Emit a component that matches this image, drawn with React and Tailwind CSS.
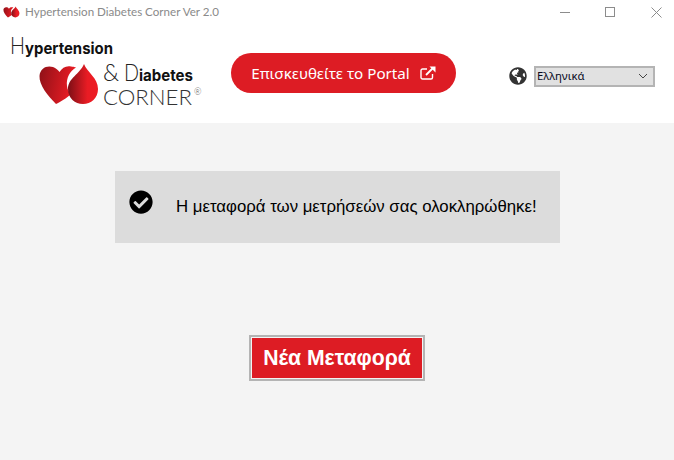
import React from "react";
import { FaCheckCircle, FaGlobeAmericas } from "react-icons/fa";

const Heart = ({ id }) => (
  <>
    <defs>
      <linearGradient id={id + "a"} x1="0" y1="0" x2="1" y2="0.2">
        <stop offset="0" stopColor="#8e1118" />
        <stop offset="1" stopColor="#ed1c24" />
      </linearGradient>
      <linearGradient id={id + "b"} x1="0" y1="0" x2="1" y2="0">
        <stop offset="0" stopColor="#7d0f16" />
        <stop offset="0.65" stopColor="#e91c24" />
        <stop offset="1" stopColor="#ed1c24" />
      </linearGradient>
    </defs>
    <path d="M56 104 C48 96 39 85 39.500 76 C40 68 47 65 53 67 C56 68 58 70 59.500 72 C62 68 66 65.500 71 66.500 C75 67 76 67.500 76 67.500 C70 71 66 78 67 86 C67.500 90 69 92 71 94 C67 98 60 102 56 104 Z" fill={`url(#${id}a)`} />
    <path d="M84 64 C87 72 98 78 98 89 C98 98 91 104 83 104 C75 104 68 98 68 89 C68 78 80 74 84 64 Z" fill={`url(#${id}b)`} />
  </>
);

export default function App() {
  return (
    <div className="w-[674px] h-[460px] flex flex-col bg-[#f4f4f4] overflow-hidden" style={{ fontFamily: "'Liberation Sans', sans-serif" }}>
      <header className="h-[123px] bg-white flex flex-col shrink-0">
        <div className="h-[24px] flex items-center pl-[3px] shrink-0">
          <svg width="17" height="12" viewBox="38 63 62 42" className="mr-[5px]">
            <Heart id="s" />
          </svg>
          <span className="text-[11.600px] text-[#8a8a8a] font-['Lato',sans-serif] leading-none">Hypertension Diabetes Corner Ver 2.0</span>
          <div className="ml-auto flex items-center">
            <svg width="45" height="24" viewBox="0 0 45 24"><path d="M5 12.500H15" stroke="#8c8c8c" strokeWidth="1" /></svg>
            <svg width="46" height="24" viewBox="0 0 46 24"><rect x="5.500" y="7.500" width="9" height="9" fill="none" stroke="#8c8c8c" /></svg>
            <svg width="28" height="24" viewBox="0 0 28 24"><path d="M5.500 7.500L15.500 17.500M15.500 7.500L5.500 17.500" stroke="#8c8c8c" strokeWidth="1" /></svg>
          </div>
        </div>
        <div className="flex-1 flex items-center">
          <svg width="225" height="99" viewBox="0 24 225 99" className="shrink-0">
            <Heart id="l" />
            <text y="54" fill="#111" fontFamily="'Inter'">
              <tspan x="10" fontSize="23" fontFamily="'Lato'" fontWeight="300" fill="#222" textLength="15" lengthAdjust="spacingAndGlyphs">H</tspan>
              <tspan x="25" fontSize="16" fontWeight="700" textLength="88" lengthAdjust="spacingAndGlyphs">ypertension</tspan>
            </text>
            <text y="81" fill="#111" fontFamily="'Inter'">
              <tspan x="103" fontSize="23" fontFamily="'Lato'" fontWeight="300" fill="#222">&amp;</tspan>
              <tspan x="124" fontSize="23" fontFamily="'Lato'" fontWeight="300" fill="#222" textLength="15" lengthAdjust="spacingAndGlyphs">D</tspan>
              <tspan x="139" fontSize="16" fontWeight="700" textLength="54" lengthAdjust="spacingAndGlyphs">iabetes</tspan>
            </text>
            <text y="105" fill="#333" fontFamily="'Lato'" fontWeight="300">
              <tspan x="103" fontSize="21" textLength="89" lengthAdjust="spacingAndGlyphs">CORNER</tspan>
              <tspan x="194" y="95" fontSize="9" fill="#555">®</tspan>
            </text>
          </svg>
          <a className="ml-[6px] mb-[1px] w-[225px] h-[40px] rounded-full bg-[#dd1c24] text-white flex items-center justify-center text-[15.200px] font-['Noto_Sans',sans-serif] gap-[10px]">
            <span>Επισκευθείτε το Portal</span>
            <svg width="16" height="14" viewBox="0 0 16 14" fill="none">
              <path d="M12.500 8V11.500C12.500 12.300 11.800 13 11 13H2.500C1.700 13 1 12.300 1 11.500V4.500C1 3.700 1.700 3 2.500 3H7" stroke="white" strokeWidth="1.400" />
              <path d="M6 9L13 2" stroke="white" strokeWidth="1.800" />
              <path d="M9.500 0.500H15.500V6.500Z" fill="white" />
            </svg>
          </a>
          <FaGlobeAmericas className="ml-[53px] mt-[5px] text-[18px] text-[#333]" />
          <div className="ml-[7px] mt-[5px] w-[121px] h-[21px] border-2 border-[#b4b4b4] bg-[#e1e1e1] flex items-center pl-[1px] pr-[5px] text-[11.300px] text-[#0a0a1e]" style={{ fontFamily: "'Noto Sans', sans-serif" }}>
            <span>Ελληνικά</span>
            <svg width="10" height="6" viewBox="0 0 10 6" className="ml-auto"><path d="M1 1L5 5L9 1" fill="none" stroke="#444" strokeWidth="1" /></svg>
          </div>
        </div>
      </header>
      <main className="flex-1 flex flex-col items-center">
        <div className="mt-[48px] ml-[1px] w-[445px] h-[72px] bg-[#dcdcdc] flex pl-[14px]">
          <FaCheckCircle className="mt-[19px] text-[24px] text-black shrink-0" />
          <p className="ml-[23px] mt-[26px] text-[16.800px] leading-[20px] text-black whitespace-nowrap">Η μεταφορά των μετρήσεών σας ολοκληρώθηκε!</p>
        </div>
        <button className="mt-[92px] w-[176px] h-[46px] border-2 border-[#b4b4b4] p-[1px] bg-[#f4f4f4]">
          <span className="block h-full bg-[#dd1c24] text-white font-bold text-[21.200px] leading-[40px] text-center whitespace-nowrap">Νέα Μεταφορά</span>
        </button>
      </main>
    </div>
  );
}
